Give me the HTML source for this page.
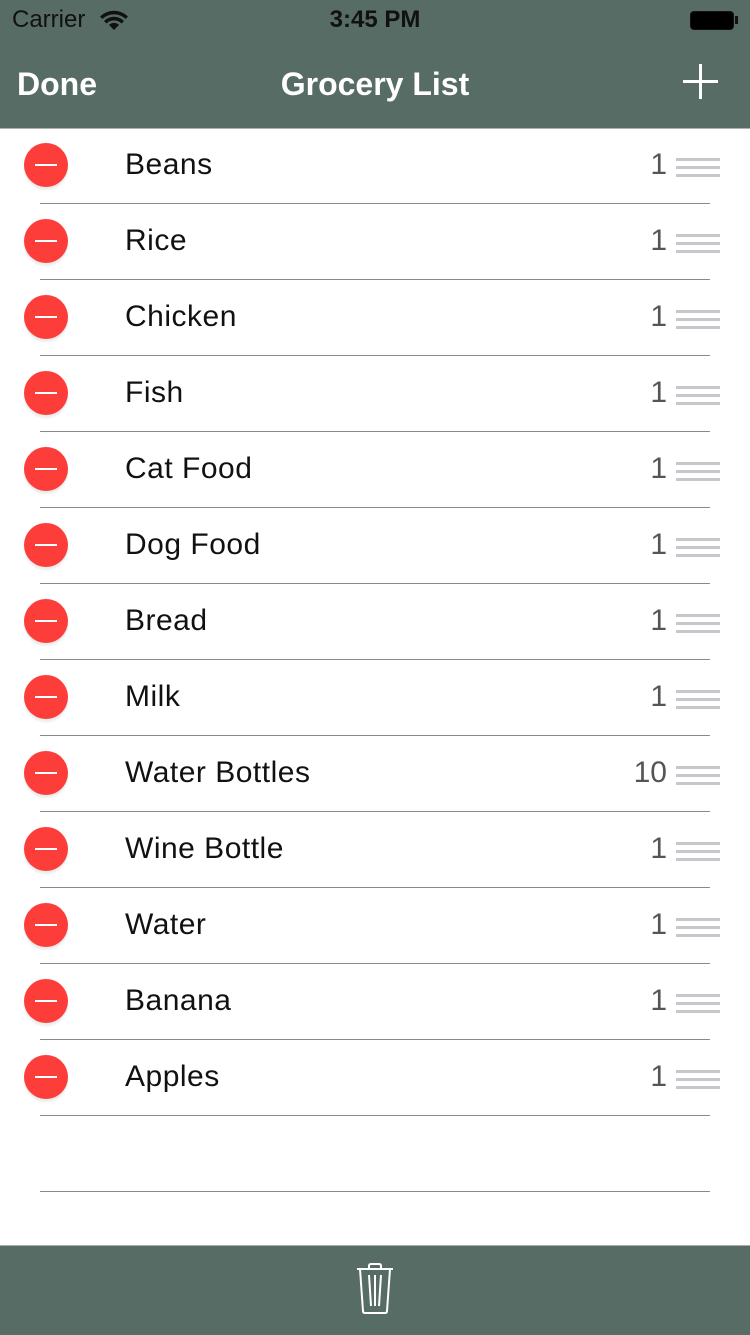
<!DOCTYPE html><html><head><style>
body{margin:0;width:750px;height:1334px;background:#fff;font-family:"Liberation Sans",sans-serif;position:relative;overflow:hidden}
.nav{position:absolute;left:0;top:0;width:750px;height:128px;background:#566c64;border-bottom:1px solid #b0b0b0}
.t{position:absolute;color:#fff;font-size:32px;font-weight:bold}
.row{position:absolute;left:0;width:750px;height:76px}
.row .c{position:absolute;left:24px;top:15px;width:44px;height:44px;border-radius:50%;background:#fc3d39;box-shadow:0 3px 2px rgba(0,0,0,.08)}
.row .c:after{content:"";position:absolute;left:11px;top:21px;width:22px;height:2px;background:#fff}
.row .n{position:absolute;left:125px;top:20px;font-size:30px;color:#111;letter-spacing:0.5px}
.row .q{position:absolute;right:83px;top:20px;font-size:30px;color:#555}
.row .g{position:absolute;left:676px;top:30px;width:44px;height:3px;background:#c6c6cb;box-shadow:0 8px 0 #c6c6cb,0 16px 0 #c6c6cb}
.row .s{position:absolute;left:40px;top:75px;width:670px;height:1px;background:#8a8a8a}
.tb{position:absolute;left:0;top:1245px;width:750px;height:89px;background:#566c64;border-top:1px solid #aaa}
</style></head><body>
<div class="nav">
<div style="position:absolute;left:12px;top:6px;font-size:24px;color:#111">Carrier</div>
<svg style="position:absolute;left:100px;top:10px" width="28" height="22" viewBox="0 0 28 22"><path d="M14 20 L9 15 A7 7 0 0 1 19 15Z M4 11 A14 14 0 0 1 24 11 L21.5 13.5 A10.5 10.5 0 0 0 6.5 13.5Z M0 6.5 A20 20 0 0 1 28 6.5 L25.5 9 A16.5 16.5 0 0 0 2.5 9Z" fill="#111"/></svg>
<div style="position:absolute;left:0;width:750px;text-align:center;top:6px;font-size:24px;font-weight:bold;color:#111">3:45 PM</div>
<div style="position:absolute;left:690px;top:11px;width:42px;height:17px;border:1.5px solid #111;border-radius:4px;background:#000"></div>
<div style="position:absolute;left:735px;top:16px;width:3px;height:8px;background:#111"></div>
<div class="t" style="left:17px;top:66px">Done</div>
<div class="t" style="left:0;width:750px;text-align:center;top:66px">Grocery List</div>
<div style="position:absolute;left:683px;top:80px;width:35px;height:3px;background:#fff"></div>
<div style="position:absolute;left:699px;top:64px;width:3px;height:35px;background:#fff"></div>
</div>
<div class="row" style="top:128px"><div class="c"></div><div class="n">Beans</div><div class="q">1</div><div class="g"></div><div class="s"></div></div>
<div class="row" style="top:204px"><div class="c"></div><div class="n">Rice</div><div class="q">1</div><div class="g"></div><div class="s"></div></div>
<div class="row" style="top:280px"><div class="c"></div><div class="n">Chicken</div><div class="q">1</div><div class="g"></div><div class="s"></div></div>
<div class="row" style="top:356px"><div class="c"></div><div class="n">Fish</div><div class="q">1</div><div class="g"></div><div class="s"></div></div>
<div class="row" style="top:432px"><div class="c"></div><div class="n">Cat Food</div><div class="q">1</div><div class="g"></div><div class="s"></div></div>
<div class="row" style="top:508px"><div class="c"></div><div class="n">Dog Food</div><div class="q">1</div><div class="g"></div><div class="s"></div></div>
<div class="row" style="top:584px"><div class="c"></div><div class="n">Bread</div><div class="q">1</div><div class="g"></div><div class="s"></div></div>
<div class="row" style="top:660px"><div class="c"></div><div class="n">Milk</div><div class="q">1</div><div class="g"></div><div class="s"></div></div>
<div class="row" style="top:736px"><div class="c"></div><div class="n">Water Bottles</div><div class="q">10</div><div class="g"></div><div class="s"></div></div>
<div class="row" style="top:812px"><div class="c"></div><div class="n">Wine Bottle</div><div class="q">1</div><div class="g"></div><div class="s"></div></div>
<div class="row" style="top:888px"><div class="c"></div><div class="n">Water</div><div class="q">1</div><div class="g"></div><div class="s"></div></div>
<div class="row" style="top:964px"><div class="c"></div><div class="n">Banana</div><div class="q">1</div><div class="g"></div><div class="s"></div></div>
<div class="row" style="top:1040px"><div class="c"></div><div class="n">Apples</div><div class="q">1</div><div class="g"></div><div class="s"></div></div>
<div class="row" style="top:1116px"><div class="s"></div></div>
<div class="tb">
<svg style="position:absolute;left:354px;top:16px" width="42" height="54" viewBox="0 0 42 54" fill="none" stroke="#fff" stroke-width="2"><path d="M3 7H39M15 7V4Q15 2 17 2H25Q27 2 27 4V7M6 7L9 49Q9 51 11 51H31Q33 51 33 49L36 7M15 13L17 44M21 13V44M27 13L25 44"/></svg>
</div>
</body></html>
